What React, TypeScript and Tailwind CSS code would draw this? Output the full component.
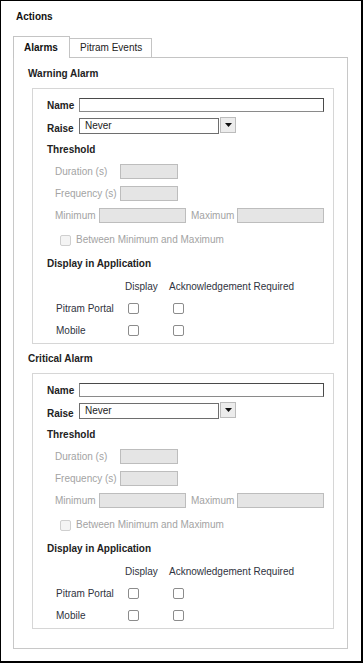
import React from "react";

const font = { fontFamily: '"Liberation Sans", Arial, sans-serif' };

const Check = ({ disabled }: { disabled?: boolean }) => (
  <span
    className={
      "block w-[11px] h-[11px] rounded-[2px] border " +
      (disabled ? "border-[#cfcfcf] bg-[#f4f4f4]" : "border-[#8c8c8c] bg-white")
    }
  />
);

const DisabledInput = ({ w }: { w: string }) => (
  <span className={`block h-[15px] border border-[#bdbdbd] bg-[#e5e5e5] ${w}`} />
);

function AlarmBox() {
  return (
    <div className="ml-[18px] mr-[13px] mt-[7px] border border-[#d6d6d6] pl-[14px] pr-[9px] pb-[5px]">
      {/* name */}
      <div className="mt-[8px] h-[16px] flex items-center">
        <span className="w-[32px] pt-[1px] font-bold text-[#222]">Name</span>
        <span className="block flex-1 h-[14px] border border-[#4a4a4a] border-l-[#8a8a8a] border-b-[#8a8a8a] bg-white" />
      </div>
      {/* raise */}
      <div className="mt-[3px] h-[18px] flex items-start">
        <span className="w-[32px] mt-[6px] font-bold text-[#222]">Raise</span>
        <span className="mt-[2px] w-[140px] h-[16px] border border-[#6e6e6e] bg-white pl-[5px] leading-[14px] text-[#222]">
          Never
        </span>
        <span className="mt-[1px] ml-[1px] w-[16px] h-[16px] border border-[#bcbcbc] bg-[#ececec] flex items-center justify-center">
          <svg width="7" height="4" viewBox="0 0 7 4">
            <path d="M0 0h7L3.5 4z" fill="#111" />
          </svg>
        </span>
      </div>
      <div className="mt-[9px] leading-[14px] font-bold text-[#222]">Threshold</div>
      <div className="text-[#a3a3a3]">
        <div className="mt-[6px] h-[16px] pl-[8px] flex items-center">
          <span className="w-[65px] pt-[1px]">Duration (s)</span>
          <DisabledInput w="w-[58px]" />
        </div>
        <div className="mt-[6px] h-[16px] pl-[8px] flex items-center">
          <span className="w-[65px] pt-[1px]">Frequency (s)</span>
          <DisabledInput w="w-[58px]" />
        </div>
        <div className="mt-[6px] h-[16px] pl-[8px] flex items-center">
          <span className="w-[44px] pt-[1px]">Minimum</span>
          <DisabledInput w="w-[87px]" />
          <span className="ml-[5px] w-[46px] pt-[1px]">Maximum</span>
          <DisabledInput w="w-[87px]" />
        </div>
        <div className="mt-[9px] h-[16px] pl-[13px] flex items-center gap-[5px]">
          <Check disabled />
          <span>Between Minimum and Maximum</span>
        </div>
      </div>
      <div className="mt-[9px] leading-[14px] font-bold text-[#222]">Display in Application</div>
      <div className="text-[#2f3340]">
        <div className="mt-[9px] h-[14px] flex items-center">
          <span className="ml-[78px] w-[44px]">Display</span>
          <span>Acknowledgement Required</span>
        </div>
        {["Pitram Portal", "Mobile"].map((r, i) => (
          <div key={r} className={(i == 0 ? "mt-[6px]" : "mt-[6px]") + " h-[16px] pl-[9px] flex items-center"}>
            <span className="w-[72px] pt-[1px]">{r}</span>
            <Check />
            <span className="ml-[34px]">
              <Check />
            </span>
          </div>
        ))}
      </div>
    </div>
  );
}

export default function App() {
  return (
    <div
      style={font}
      className="w-[363px] h-[663px] bg-white border-l border-t border-r-2 border-b-2 border-black text-[10px] leading-[14px] pl-[12px] pr-[13px]"
    >
      <div className="pt-[9px] pl-[3px] font-bold text-[#111]">Actions</div>
      {/* tabs */}
      <div className="mt-[12px] flex items-end">
        <div className="w-[57px] h-[22px] border border-b-0 border-[#c4c4c4] bg-white pl-[10px] pt-[4px] font-bold text-[#111]">
          Alarms
        </div>
        <div className="w-[82px] h-[20px] border-t border-r border-b border-[#c4c4c4] pl-[10px] pt-[2px] text-[#222]">
          Pitram Events
        </div>
        <div className="flex-1 h-[1px] bg-[#c4c4c4]" />
      </div>
      <div className="h-[591px] border-l border-r border-b border-[#c8c8c8]">
        <div className="pt-[9px] pl-[14px] font-bold text-[#222]">Warning Alarm</div>
        <AlarmBox />
        <div className="mt-[8px] pl-[14px] font-bold text-[#222]">Critical Alarm</div>
        <AlarmBox />
      </div>
    </div>
  );
}
